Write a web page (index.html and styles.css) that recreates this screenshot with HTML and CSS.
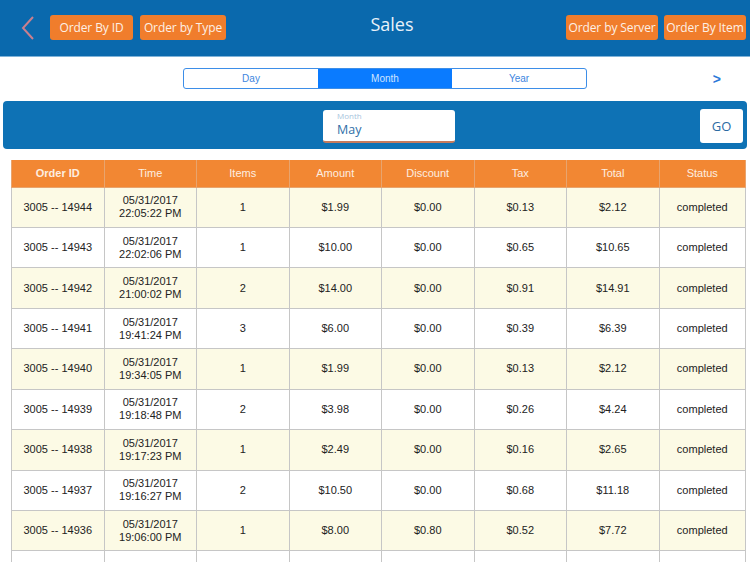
FILE: index.html
```html
<!DOCTYPE html>
<html>
<head>
<meta charset="utf-8">
<title>Sales</title>
<link rel="stylesheet" href="styles.css">
</head>
<body>
<header class="topbar">
  <div class="group left">
    <span class="back"><svg width="16" height="26" viewBox="0 0 16 26"><path d="M13 2 L3 13 L13 24" fill="none" stroke="#c97f8e" stroke-width="2"/></svg></span>
    <button class="obtn">Order By ID</button>
    <button class="obtn">Order by Type</button>
  </div>
  <h1 class="title">Sales</h1>
  <div class="group right">
    <button class="obtn">Order by Server</button>
    <button class="obtn">Order By Item</button>
  </div>
</header>

<div class="segrow">
  <div class="seg">
    <span class="segitem">Day</span>
    <span class="segitem active">Month</span>
    <span class="segitem">Year</span>
  </div>
  <span class="next">&gt;</span>
</div>

<div class="panel">
  <div class="field">
    <span class="flabel">Month</span>
    <span class="fvalue">May</span>
  </div>
  <button class="go">GO</button>
</div>

<table class="orders">
  <colgroup>
    <col class="c"><col class="c"><col class="c"><col class="c"><col class="c"><col class="c"><col class="c"><col class="last">
  </colgroup>
  <thead>
    <tr><th class="strong">Order ID</th><th>Time</th><th>Items</th><th>Amount</th><th>Discount</th><th>Tax</th><th>Total</th><th>Status</th></tr>
  </thead>
  <tbody>
    <tr class="odd"><td>3005 -- 14944</td><td>05/31/2017<br>22:05:22 PM</td><td>1</td><td>$1.99</td><td>$0.00</td><td>$0.13</td><td>$2.12</td><td>completed</td></tr>
    <tr><td>3005 -- 14943</td><td>05/31/2017<br>22:02:06 PM</td><td>1</td><td>$10.00</td><td>$0.00</td><td>$0.65</td><td>$10.65</td><td>completed</td></tr>
    <tr class="odd"><td>3005 -- 14942</td><td>05/31/2017<br>21:00:02 PM</td><td>2</td><td>$14.00</td><td>$0.00</td><td>$0.91</td><td>$14.91</td><td>completed</td></tr>
    <tr><td>3005 -- 14941</td><td>05/31/2017<br>19:41:24 PM</td><td>3</td><td>$6.00</td><td>$0.00</td><td>$0.39</td><td>$6.39</td><td>completed</td></tr>
    <tr class="odd"><td>3005 -- 14940</td><td>05/31/2017<br>19:34:05 PM</td><td>1</td><td>$1.99</td><td>$0.00</td><td>$0.13</td><td>$2.12</td><td>completed</td></tr>
    <tr><td>3005 -- 14939</td><td>05/31/2017<br>19:18:48 PM</td><td>2</td><td>$3.98</td><td>$0.00</td><td>$0.26</td><td>$4.24</td><td>completed</td></tr>
    <tr class="odd"><td>3005 -- 14938</td><td>05/31/2017<br>19:17:23 PM</td><td>1</td><td>$2.49</td><td>$0.00</td><td>$0.16</td><td>$2.65</td><td>completed</td></tr>
    <tr><td>3005 -- 14937</td><td>05/31/2017<br>19:16:27 PM</td><td>2</td><td>$10.50</td><td>$0.00</td><td>$0.68</td><td>$11.18</td><td>completed</td></tr>
    <tr class="odd"><td>3005 -- 14936</td><td>05/31/2017<br>19:06:00 PM</td><td>1</td><td>$8.00</td><td>$0.80</td><td>$0.52</td><td>$7.72</td><td>completed</td></tr>
    <tr><td></td><td></td><td></td><td></td><td></td><td></td><td></td><td></td></tr>
  </tbody>
</table>
</body>
</html>
```

FILE: styles.css
```css
html, body {
  margin: 0;
  padding: 0;
  background: #ffffff;
  height: 562px;
  overflow: hidden;
}
body {
  font-family: "Open Sans", "Noto Sans", sans-serif;
}
.topbar {
  height: 57px;
  box-sizing: border-box;
  background: #0a69ad;
  border-bottom: 1px solid #7fb3d9;
  display: flex;
  align-items: flex-start;
  padding: 15px 4px 0 20px;
}
.group {
  display: flex;
  align-items: center;
  gap: 7px;
}
.group.right {
  gap: 6px;
}
.back {
  display: flex;
  width: 23px;
  height: 25px;
  align-items: center;
}
.obtn {
  height: 25px;
  border: none;
  border-radius: 3px;
  background: #f07d2c;
  color: #fdf0e6;
  font-family: "Open Sans", "Noto Sans", sans-serif;
  font-size: 12px;
  letter-spacing: -0.1px;
  white-space: nowrap;
  padding: 0;
  margin: 0;
}
.left .obtn:nth-of-type(1) { width: 83px; }
.left .obtn:nth-of-type(2) { width: 86px; }
.right .obtn:nth-of-type(1) { width: 92px; }
.right .obtn:nth-of-type(2) { width: 82px; }
.title {
  flex: 1;
  margin: -1px 0 0 0;
  text-align: center;
  font-weight: 400;
  font-size: 18px;
  line-height: 20px;
  color: #e8f1f9;
  padding-right: 8px;
}
.segrow {
  display: flex;
  align-items: center;
  margin-top: 11px;
  height: 21px;
}
.seg {
  margin-left: 183px;
  width: 404px;
  height: 21px;
  box-sizing: border-box;
  border: 1px solid #3d8ee8;
  border-radius: 3px;
  display: flex;
  overflow: hidden;
}
.segitem {
  flex: 1;
  display: flex;
  align-items: center;
  justify-content: center;
  font-family: "Liberation Sans", sans-serif;
  font-size: 10px;
  color: #3d86e0;
}
.segitem.active {
  background: #0a7bff;
  color: #cfe4ff;
}
.next {
  margin-left: auto;
  margin-right: 29px;
  font-family: "Liberation Sans", sans-serif;
  font-weight: bold;
  font-size: 14px;
  color: #2a78d8;
}
.panel {
  margin: 12px 3px 0 3px;
  height: 48px;
  background: #0e72b5;
  border-radius: 4px;
  display: flex;
  align-items: flex-start;
  padding-left: 320px;
  padding-right: 4px;
}
.field {
  margin-top: 9px;
  width: 132px;
  height: 33px;
  box-sizing: border-box;
  background: #ffffff;
  border-radius: 3px;
  border-bottom: 2px solid #c77b5c;
  display: flex;
  flex-direction: column;
  padding: 0 0 0 14px;
}
.flabel {
  display: block;
  font-size: 8px;
  line-height: 11px;
  height: 11px;
  color: #a8c4dd;
}
.fvalue {
  display: block;
  font-size: 12.5px;
  line-height: normal;
  margin-top: -0.5px;
  color: #2f6fa8;
}
.go {
  margin-left: auto;
  margin-top: 8px;
  width: 43px;
  height: 34px;
  border: none;
  border-radius: 3px;
  background: #ffffff;
  color: #2b6aa3;
  font-family: "Open Sans", "Noto Sans", sans-serif;
  font-size: 13px;
  padding: 0;
}
.orders {
  margin: 11px 0 0 11px;
  width: 734px;
  border-collapse: collapse;
  table-layout: fixed;
  font-family: "Liberation Sans", Arial, sans-serif;
  font-size: 11px;
  color: #222222;
}
.orders col.c { width: 92.5px; }
.orders col.last { width: 86.5px; }
.orders thead tr {
  height: 27px;
}
.orders th {
  height: 26px;
  padding: 0;
  background: #f28733;
  color: #fdeee0;
  font-weight: normal;
  font-size: 11px;
  border: 1px solid #e8a46e;
  border-top: none;
}
.orders th.strong { font-weight: bold; }
.orders td {
  height: 39.4px;
  box-sizing: border-box;
  padding: 0;
  text-align: center;
  vertical-align: middle;
  line-height: 13px;
  border: 1px solid #c6c6c6;
}
.orders tbody tr {
  height: 40.44px;
}
.orders tr.odd td {
  background: #fcfae5;
}
```
